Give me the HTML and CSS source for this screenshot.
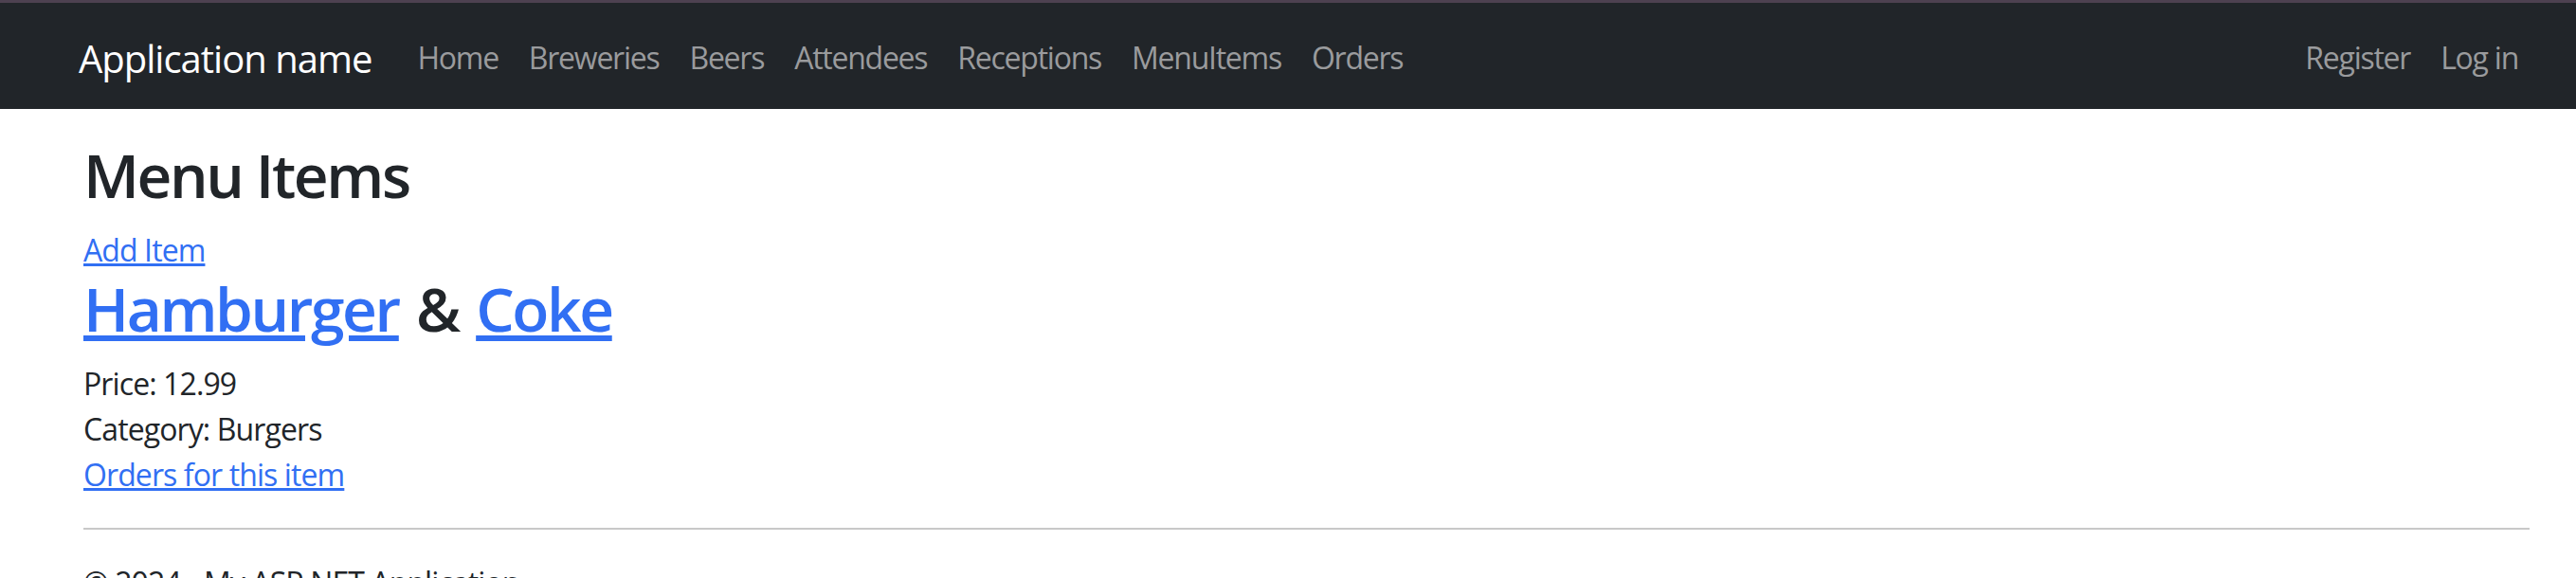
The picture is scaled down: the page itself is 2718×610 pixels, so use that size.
FILE: index.html
```html
<!DOCTYPE html>
<html lang="en">
<head>
<meta charset="utf-8">
<title>Menu Items - My ASP.NET Application</title>
<link rel="stylesheet" href="styles.css">
</head>
<body>
<div class="topline"></div>
<nav class="navbar">
  <a class="brand" href="#">Application name</a>
  <ul class="nav-links">
    <li><a href="#">Home</a></li>
    <li><a href="#">Breweries</a></li>
    <li><a href="#">Beers</a></li>
    <li><a href="#">Attendees</a></li>
    <li><a href="#">Receptions</a></li>
    <li><a href="#">MenuItems</a></li>
    <li><a href="#">Orders</a></li>
  </ul>
  <ul class="nav-links nav-right">
    <li><a href="#">Register</a></li>
    <li><a href="#">Log in</a></li>
  </ul>
</nav>
<main class="content">
  <h2 class="title">Menu Items</h2>
  <div class="line"><a href="#">Add Item</a></div>
  <h2 class="item-title"><a href="#">Hamburger</a> &amp; <a href="#">Coke</a></h2>
  <div class="line">Price: 12.99</div>
  <div class="line">Category: Burgers</div>
  <div class="line"><a href="#">Orders for this item</a></div>
  <hr class="rule">
  <footer class="footer">
    <p>&copy; 2024 - My ASP.NET Application</p>
  </footer>
</main>
</body>
</html>
```

FILE: styles.css
```css
html, body {
  margin: 0;
  padding: 0;
  background: #ffffff;
}

body {
  font-family: "Open Sans", "Noto Sans", sans-serif;
  font-size: 32px;
  line-height: 1.5;
  letter-spacing: -0.9px;
  color: #212529;
}

.topline {
  height: 3px;
  background: #4d4150;
}

.navbar {
  display: flex;
  align-items: center;
  height: 112px;
  background: #212529;
  padding: 0 45px 0 83px;
  box-sizing: border-box;
}

.brand {
  font-size: 40px;
  line-height: 60px;
  padding-top: 6px;
  color: #ffffff;
  text-decoration: none;
  letter-spacing: -1px;
  margin-right: 32px;
}

.nav-links {
  display: flex;
  list-style: none;
  margin: 0;
  padding: 0;
}

.nav-links a {
  display: block;
  padding: 18px 16px 14px 16px;
  font-size: 32px;
  line-height: 48px;
  letter-spacing: -1.25px;
  color: #9a9b9d;
  text-decoration: none;
}

.nav-right {
  margin-left: auto;
}

.content {
  padding: 32px 49px 0 88px;
}

a {
  color: #316ff3;
}

.title,
.item-title {
  font-size: 64px;
  font-weight: 600;
  line-height: 1.2;
  letter-spacing: -2.4px;
  margin: 0 0 16px 0;
}

.item-title {
  word-spacing: 4px;
}

.line {
  margin: 0;
}

.rule {
  margin: 32px 0;
  border: 0;
  border-top: 2px solid #c8c8c8;
}

.footer p {
  margin: 0;
}
```
